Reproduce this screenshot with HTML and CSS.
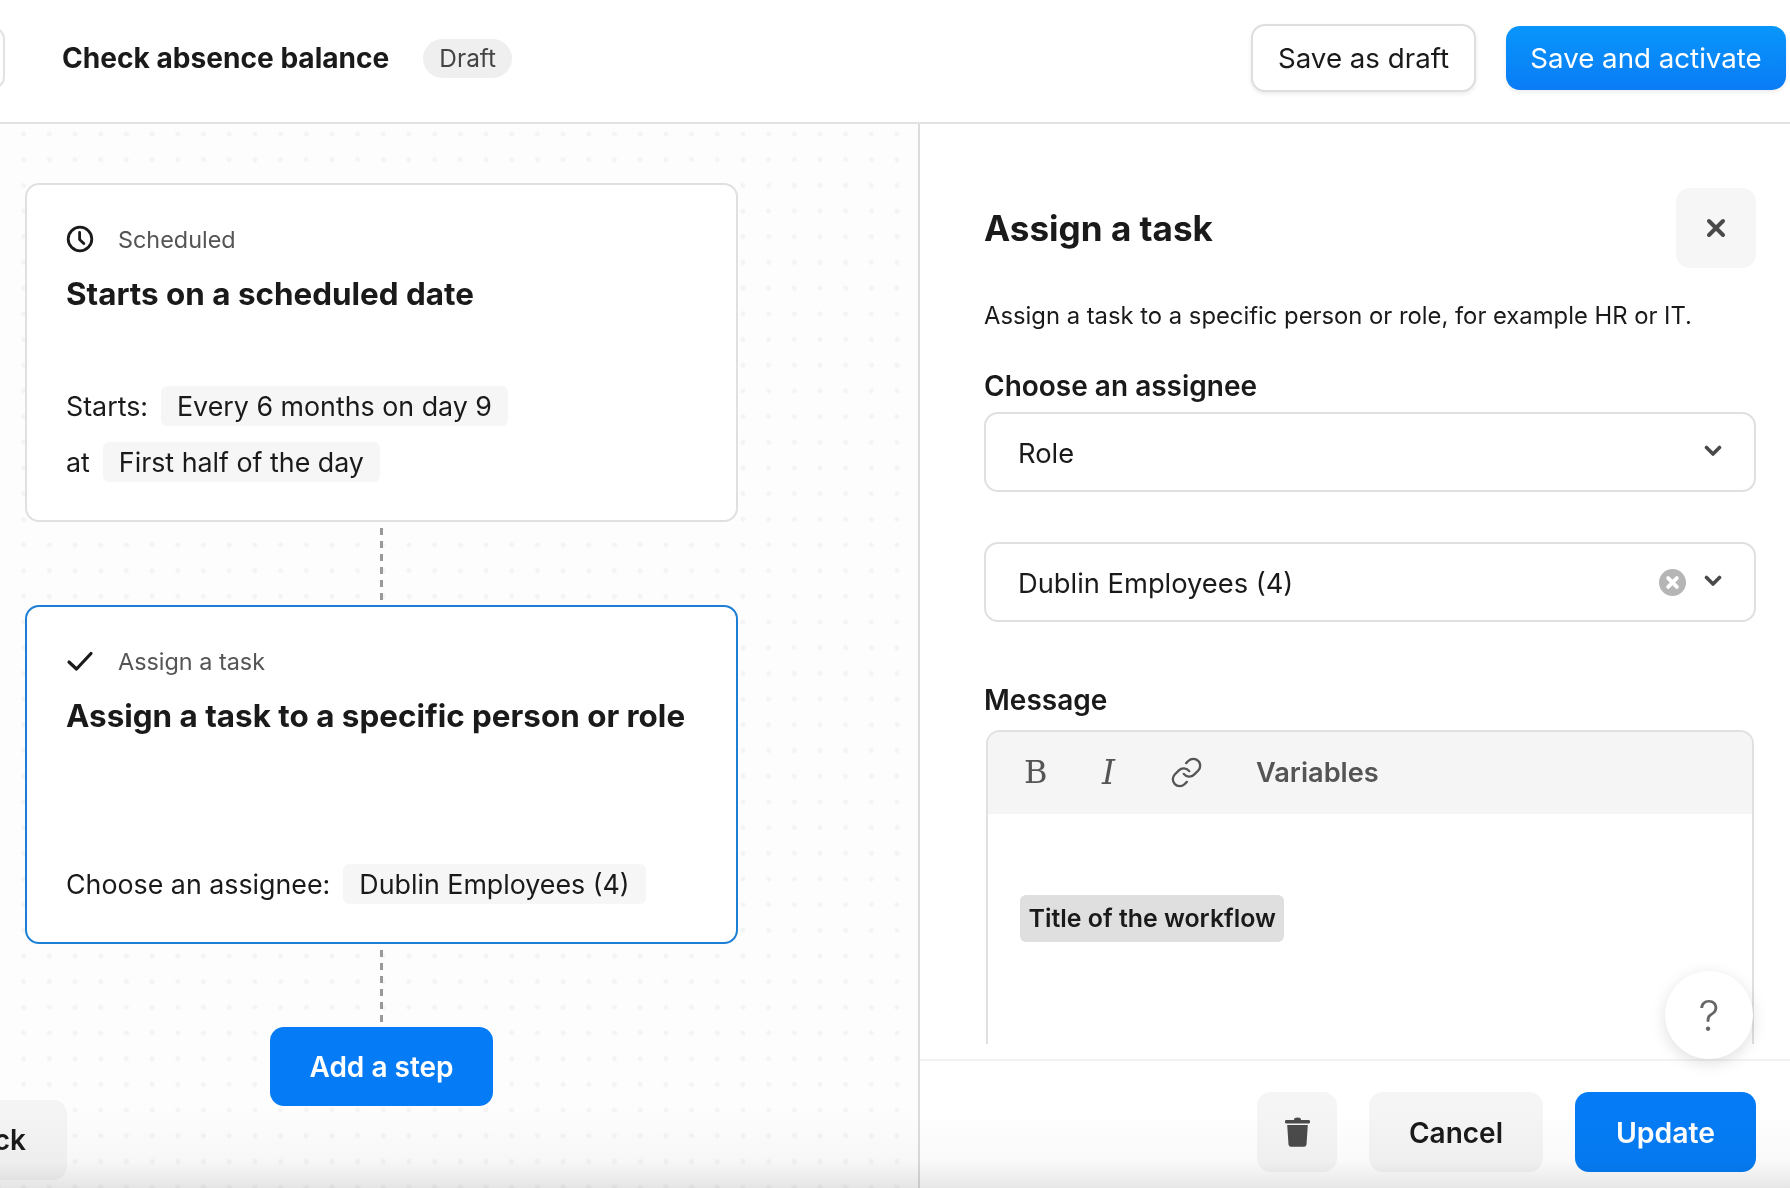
FILE: index.html
```html
<!DOCTYPE html>
<html lang="en">
<head>
    <meta charset="UTF-8">
    <meta name="viewport" content="width=device-width, initial-scale=1.0">
    <title>Check absence balance</title>
    <link rel="stylesheet" href="styles.css">
</head>
<body>
    <div class="topbar">
        <div class="back-stub"></div>
        <h1>Check absence balance</h1>
        <span class="draft">Draft</span>
        <div class="topbar-actions">
            <button class="btn-draft">Save as draft</button>
            <button class="btn-activate">Save and activate</button>
        </div>
    </div>
    <div class="main">
        <div class="canvas">
            <div class="card">
                <div class="card-type">
                    <svg class="type-icon" viewBox="0 0 28 28" fill="none" stroke="#1a1a1a" stroke-width="2.8" stroke-linecap="round" stroke-linejoin="round"><circle cx="14" cy="14" r="11.8"/><path d="M13.6 7.5v7l4.2 4"/></svg>
                    <span>Scheduled</span>
                </div>
                <h3>Starts on a scheduled date</h3>
                <div class="card-values">
                    <div class="value-row">Starts: <span class="value">Every 6 months on day 9</span></div>
                    <div class="value-row">at <span class="value">First half of the day</span></div>
                </div>
            </div>
            <div class="connector"></div>
            <div class="card selected">
                <div class="card-type">
                    <svg class="type-icon" viewBox="0 0 28 28" fill="none" stroke="#1a1a1a" stroke-width="3.2" stroke-linecap="round" stroke-linejoin="round"><path d="M3 15l7.5 7L25 6.5"/></svg>
                    <span>Assign a task</span>
                </div>
                <h3>Assign a task to a specific person or role</h3>
                <div class="card-values">
                    <div class="value-row">Choose an assignee: <span class="value">Dublin Employees (4)</span></div>
                </div>
            </div>
            <div class="connector"></div>
            <button class="btn-step">Add a step</button>
            <button class="btn-back">Back</button>
        </div>
        <div class="panel">
            <div class="panel-body">
                <div class="panel-head">
                    <h2>Assign a task</h2>
                    <button class="btn-close">
                        <svg viewBox="0 0 20 20" fill="none" stroke="#4a4a4a" stroke-width="4" stroke-linecap="round"><path d="M3 3l14 14M17 3L3 17"/></svg>
                    </button>
                </div>
                <p class="intro">Assign a task to a specific person or role, for example HR or IT.</p>
                <label>Choose an assignee</label>
                <div class="select first">
                    <span>Role</span>
                    <svg class="chevron" viewBox="0 0 18 12" fill="none" stroke="#4a4a4a" stroke-width="3.6" stroke-linecap="round" stroke-linejoin="round"><path d="M2.5 2.5L9 9l6.5-6.5"/></svg>
                </div>
                <div class="select">
                    <span>Dublin Employees (4)</span>
                    <svg class="clear" viewBox="0 0 28 28"><circle cx="14" cy="14" r="14" fill="#b5b5b5"/><path d="M9.5 9.5l9 9M18.5 9.5l-9 9" stroke="#fff" stroke-width="4" stroke-linecap="round"/></svg>
                    <svg class="chevron" viewBox="0 0 18 12" fill="none" stroke="#4a4a4a" stroke-width="3.6" stroke-linecap="round" stroke-linejoin="round"><path d="M2.5 2.5L9 9l6.5-6.5"/></svg>
                </div>
                <label class="message-label">Message</label>
                <div class="editor">
                    <div class="toolbar">
                        <span class="tool-b">B</span>
                        <span class="tool-i">I</span>
                        <svg class="tool-link" viewBox="0 0 24 24" fill="none" stroke="#555" stroke-width="1.7" stroke-linecap="round" stroke-linejoin="round"><path d="M10 13a5 5 0 0 0 7.54.54l3-3a5 5 0 0 0-7.07-7.07l-1.72 1.71"/><path d="M14 11a5 5 0 0 0-7.54-.54l-3 3a5 5 0 0 0 7.07 7.07l1.71-1.71"/></svg>
                        <span class="tool-vars">Variables</span>
                    </div>
                    <div class="editor-text">
                        <span class="chip">Title of the workflow</span>
                    </div>
                </div>
            </div>
            <div class="panel-footer">
                <button class="btn-trash">
                    <svg viewBox="0 0 25 30" fill="#4a4a4a"><path d="M9 3a3.5 2.4 0 0 1 7 0h7.5a1.4 1.4 0 0 1 0 3.4H1.5a1.4 1.4 0 0 1 0-3.4z"/><path d="M2.2 8h20.6l-1.3 19.6a2.2 2.2 0 0 1-2.2 2.1H5.7a2.2 2.2 0 0 1-2.2-2.1z"/></svg>
                </button>
                <button class="btn-cancel">Cancel</button>
                <button class="btn-update">Update</button>
            </div>
            <button class="btn-help">?</button>
        </div>
        <div class="bottom-fade"></div>
    </div>
</body>
</html>
```

FILE: styles.css
```css
* {
    box-sizing: border-box;
}
html, body {
    height: 100%;
}
body {
    margin: 0;
    font-family: Inter, "Liberation Sans", sans-serif;
    color: #1a1a1a;
    background-color: #fff;
    display: flex;
    flex-direction: column;
    overflow: hidden;
}
button {
    font-family: inherit;
    border: none;
    cursor: pointer;
}

/* top bar */
.topbar {
    height: 124px;
    flex-shrink: 0;
    display: flex;
    align-items: center;
    padding: 0 4px 6px 0;
    border-bottom: 2px solid #e2e2e2;
}
.back-stub {
    width: 80px;
    height: 62px;
    margin-left: -75px;
    border: 2px solid #e2e2e2;
    border-radius: 12px;
}
.topbar h1 {
    margin: 0 0 0 57px;
    font-size: 28.1px;
    font-weight: 650;
}
.draft {
    margin-left: 34px;
    padding: 0 16px;
    height: 39px;
    line-height: 39px;
    border-radius: 20px;
    background-color: #efefef;
    color: #444;
    font-size: 24.4px;
}
.topbar-actions {
    margin-left: auto;
    display: flex;
    align-items: center;
    gap: 30px;
}
.btn-draft {
    width: 225px;
    height: 68px;
    background-color: #fff;
    border: 2px solid #dedede;
    border-radius: 14px;
    color: #1a1a1a;
    font-size: 27.7px;
    box-shadow: 0 2px 4px rgba(0, 0, 0, 0.08);
}
.btn-activate {
    width: 280px;
    height: 64px;
    background: linear-gradient(#0896fb, #0a7cf6);
    border-radius: 14px;
    color: #fff;
    font-size: 27.7px;
    box-shadow: 0 2px 4px rgba(0, 0, 0, 0.08);
}

/* left canvas */
.main {
    flex: 1;
    display: flex;
    position: relative;
    min-height: 0;
}
.canvas {
    width: 920px;
    flex-shrink: 0;
    position: relative;
    padding: 59px 0 0 25px;
    background-color: #fdfdfd;
    background-image: radial-gradient(circle, #f4f4f4 2px, transparent 3px);
    background-size: 25.7px 25.7px;
    background-position: 10.85px -2.85px;
    border-right: 2px solid #dcdcdc;
}
.card {
    width: 713px;
    height: 339px;
    padding: 40px 39px 0 39px;
    background-color: #fff;
    border: 2px solid #e0e0e0;
    border-radius: 14px;
    display: flex;
    flex-direction: column;
}
.card.selected {
    border-color: #1c7fd6;
}
.card-type {
    display: flex;
    align-items: center;
    gap: 24px;
    color: #555;
    font-size: 23.4px;
    height: 28px;
}
.type-icon {
    width: 28px;
    height: 28px;
}
.card h3 {
    margin: 20px 0 0;
    font-size: 31.4px;
    font-weight: 650;
    line-height: 42px;
}
.card-values {
    margin-top: auto;
    padding-bottom: 38px;
    display: flex;
    flex-direction: column;
    gap: 16px;
    font-size: 26.8px;
}
.value-row {
    display: flex;
    align-items: center;
    gap: 13px;
    height: 40px;
}
.value {
    padding: 0 16px;
    height: 40px;
    line-height: 40px;
    background-color: #f6f6f6;
    border-radius: 6px;
}
.connector {
    width: 3px;
    height: 72px;
    margin: 6px 0 5px 355px;
    background: repeating-linear-gradient(#999 0 7px, transparent 7px 13px);
}
.btn-step {
    display: block;
    width: 223px;
    height: 79px;
    margin: 5px 0 0 245px;
    background-color: #057cf5;
    border-radius: 14px;
    color: #fff;
    font-size: 28px;
    font-weight: 600;
}
.btn-back {
    position: absolute;
    left: -94px;
    bottom: 8px;
    width: 161px;
    height: 80px;
    padding-left: 18px;
    background-color: #f4f4f4;
    border-radius: 14px;
    color: #1a1a1a;
    font-size: 28px;
    font-weight: 600;
    text-align: center;
    z-index: 2;
}

/* right panel */
.panel {
    flex: 1;
    position: relative;
    display: flex;
    flex-direction: column;
    min-width: 0;
}
.panel-body {
    flex: 1;
    min-height: 0;
    overflow: hidden;
    padding: 64px 34px 0 64px;
}
.panel-head {
    display: flex;
    align-items: center;
    justify-content: space-between;
    height: 80px;
}
.panel-head h2 {
    margin: 0;
    font-size: 35.1px;
    font-weight: 650;
}
.btn-close {
    width: 80px;
    height: 80px;
    padding: 0;
    display: flex;
    align-items: center;
    justify-content: center;
    background-color: #f6f6f6;
    border-radius: 14px;
}
.btn-close svg {
    width: 20px;
    height: 20px;
}
.intro {
    margin: 33px 0 0;
    font-size: 23.8px;
    line-height: 30px;
}
label {
    display: block;
    margin-top: 38px;
    font-size: 28px;
    font-weight: 600;
    line-height: 34px;
}
.select {
    height: 80px;
    margin-top: 50px;
    padding: 2px 32px 0;
    display: flex;
    align-items: center;
    border: 2px solid #e0e0e0;
    border-radius: 14px;
    font-size: 27.3px;
}
.select.first {
    margin-top: 9px;
}
.select span {
    flex: 1;
}
.chevron {
    width: 18px;
    height: 12px;
    margin-top: -4px;
}
.clear {
    width: 27px;
    height: 27px;
    margin: -2px 18px 0 0;
}
.message-label {
    margin-top: 61px;
}
.editor {
    margin: 13px 2px 0;
    height: 314px;
    border: 2px solid #e0e0e0;
    border-bottom: none;
    border-radius: 14px 14px 0 0;
}
.toolbar {
    height: 82px;
    padding: 0 0 2px 36px;
    display: flex;
    align-items: center;
    background-color: #f5f5f5;
    border-radius: 12px 12px 0 0;
    color: #555;
}
.tool-b {
    width: 78px;
    font-family: "DejaVu Serif", serif;
    font-size: 32px;
}
.tool-i {
    width: 68px;
    font-family: "DejaVu Serif", serif;
    font-style: italic;
    font-size: 33px;
}
.tool-link {
    width: 33px;
    height: 33px;
}
.tool-vars {
    margin-left: 53px;
    font-size: 27.2px;
    font-weight: 600;
}
.editor-text {
    padding: 81px 0 0 32px;
}
.chip {
    display: inline-block;
    height: 47px;
    padding: 0 8.5px;
    line-height: 47px;
    background-color: #dfdfdf;
    border-radius: 6px;
    font-size: 24.9px;
    font-weight: 600;
}
.panel-footer {
    height: 129px;
    flex-shrink: 0;
    display: flex;
    justify-content: flex-end;
    align-items: flex-start;
    gap: 32px;
    padding: 31px 34px 0 0;
    background-color: #fff;
    border-top: 2px solid #f2f2f2;
}
.panel-footer button {
    height: 80px;
    border-radius: 14px;
    font-size: 28px;
    font-weight: 600;
}
.btn-trash {
    width: 80px;
    padding: 0;
    display: flex;
    align-items: center;
    justify-content: center;
    background-color: #f5f5f5;
}
.btn-trash svg {
    width: 25px;
    height: 30px;
}
.btn-cancel {
    width: 174px;
    padding-top: 2px;
    background-color: #f5f5f5;
    color: #1a1a1a;
}
.panel-footer .btn-update {
    width: 181px;
    padding-top: 2px;
    background-color: #057cf5;
    color: #fff;
    font-size: 28.4px;
}
.btn-help {
    position: absolute;
    right: 37px;
    bottom: 129px;
    width: 88px;
    height: 88px;
    padding: 0;
    background-color: #fff;
    border-radius: 50%;
    color: #666;
    font-size: 42px;
    font-weight: 300;
    box-shadow: 0 4px 16px rgba(0, 0, 0, 0.13);
    z-index: 2;
}
.bottom-fade {
    position: absolute;
    left: 0;
    right: 0;
    bottom: 0;
    height: 76px;
    background: linear-gradient(#fff 0%, #f9f9f9 65%, #e7e7e7 100%);
    mix-blend-mode: multiply;
    pointer-events: none;
    z-index: 3;
}
```
